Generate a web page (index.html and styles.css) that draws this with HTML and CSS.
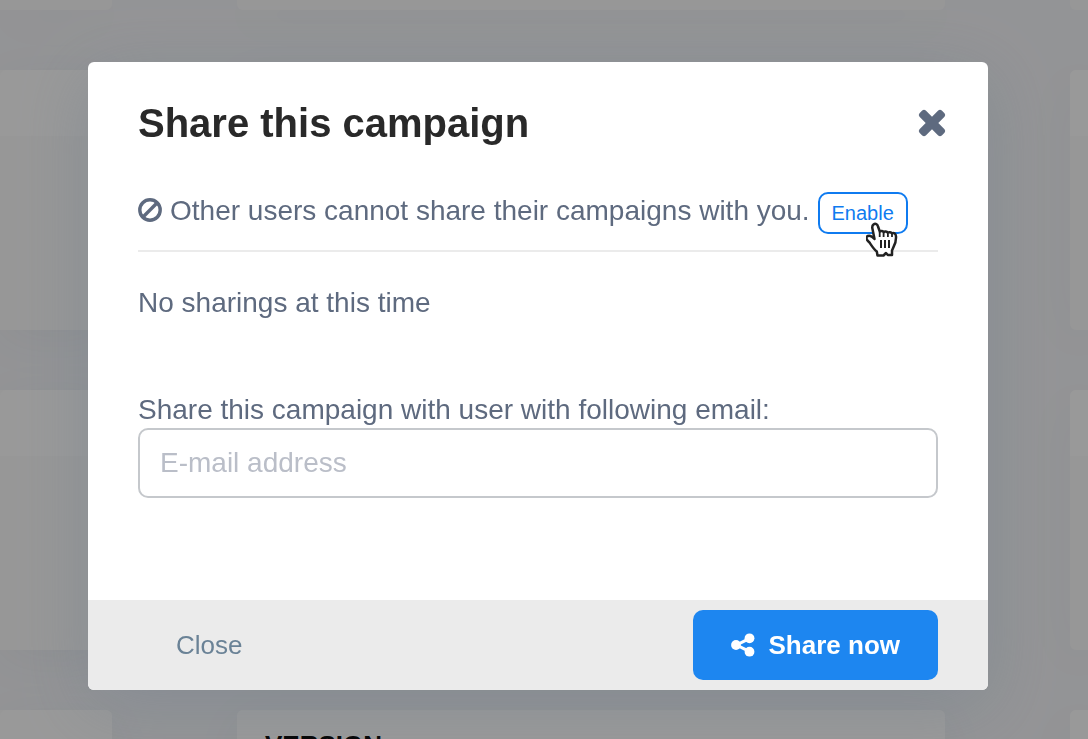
FILE: index.html
```html
<!DOCTYPE html>
<html lang="en">
<head>
    <meta charset="UTF-8">
    <meta name="viewport" content="width=device-width, initial-scale=1.0">
    <title>Share this campaign</title>
    <link rel="stylesheet" href="styles.css">
</head>
<body>

    <!-- dashboard behind the modal -->
    <div class="board">
        <div class="column column-left">
            <div class="card card-cut"></div>
            <div class="card"><div class="card-head"></div></div>
            <div class="card"><div class="card-head"></div></div>
            <div class="card"><div class="card-head"></div></div>
        </div>
        <div class="column">
            <div class="card card-cut"></div>
            <div class="card card-tall"></div>
            <div class="card"><div class="card-head">VERSION</div></div>
        </div>
        <div class="column column-right">
            <div class="card card-cut"></div>
            <div class="card"><div class="card-head"></div></div>
            <div class="card"><div class="card-head"></div></div>
            <div class="card"><div class="card-head"></div></div>
        </div>
    </div>

    <div class="overlay">
        <div class="modal" role="dialog" aria-labelledby="modal-title">
            <div class="modal-header">
                <h1 id="modal-title">Share this campaign</h1>
                <button type="button" class="btn-x" aria-label="Close dialog">
                    <svg width="28" height="28" viewBox="0 0 28 28" fill="currentColor">
                        <path d="M4.200 1.500Q6 0 7.800 1.500L14 7.700 20.200 1.500Q22 0 23.800 1.500L26.500 4.200Q28 6 26.500 7.800L20.300 14 26.500 20.200Q28 22 26.500 23.800L23.800 26.500Q22 28 20.200 26.500L14 20.300 7.800 26.500Q6 28 4.200 26.500L1.500 23.800Q0 22 1.500 20.200L7.700 14 1.500 7.800Q0 6 1.500 4.200Z"/>
                    </svg>
                </button>
            </div>

            <div class="modal-body">
                <div class="status">
                    <svg class="icon-ban" width="24" height="24" viewBox="0 0 24 24" fill="none" stroke="currentColor" stroke-width="3.400">
                        <circle cx="12" cy="12" r="10.200"/>
                        <path d="M4.800 19.200 19.200 4.800"/>
                    </svg>
                    <span>Other users cannot share their campaigns with you.</span>
                    <div class="enable">
                        <button type="button" class="btn-enable">Enable</button>
                        <!-- hand pointer -->
                        <svg class="pointer" width="32" height="36" viewBox="0 0 32 36">
                            <path d="M7.500 2.500C9.500 1 11.500 2.300 12 4.500L13.800 9.500C15 8.700 16.800 8.900 17.600 10.200 18.800 9.200 20.800 9.400 21.800 10.800 23.200 9.800 25 10 25.900 11.300 27.800 10.300 30 11.500 30 14.500 30.200 19 29.500 22 27.300 25.500L26 28.500 26 33 21.800 33 20 31 17.500 33.500 11.500 33.500 10.800 29.500C8 27.500 5.500 23.500 3.500 20.500 0 17.500-.5 15 1.800 14 3.800 13.200 6.300 14.500 8.500 17L6.500 7C6 5 6.200 3.500 7.500 2.500Z" fill="#fff" stroke="#222" stroke-width="2.500" stroke-linejoin="round"/>
                            <path d="M13.700 10v5M17.600 11v4M21.900 11.500V15M26 12v3" fill="none" stroke="#222" stroke-width="1.800"/>
                            <path d="M15 18v8M19 18v8M23 18v8" fill="none" stroke="#222" stroke-width="2"/>
                        </svg>
                    </div>
                </div>

                <p class="empty">No sharings at this time</p>

                <label for="email">Share this campaign with user with following email:</label>
                <input type="email" id="email" placeholder="E-mail address">
            </div>

            <div class="modal-footer">
                <button type="button" class="btn-close">Close</button>
                <button type="button" class="btn-share">
                    <svg width="24" height="24" viewBox="0 0 24 24" fill="currentColor">
                        <path d="M18.500 5.500 5.500 12 18.500 18.500" fill="none" stroke="currentColor" stroke-width="3"/>
                        <circle cx="18.500" cy="5.300" r="4.900"/>
                        <circle cx="5" cy="12" r="4.900"/>
                        <circle cx="18.500" cy="18.700" r="4.900"/>
                    </svg>
                    Share now
                </button>
            </div>
        </div>
    </div>

</body>
</html>
```
FILE: styles.css
```css
* {
    box-sizing: border-box;
}

body {
    margin: 0;
    height: 100vh;
    overflow: hidden;
    background: #f6f7fa;
    color: #5e6a7f;
    font-family: "Liberation Sans", Arial, sans-serif;
    font-size: 28px;
    line-height: 36px;
}

button,
input {
    font-family: inherit;
}

button {
    cursor: pointer;
}

/* board */
.board {
    display: grid;
    grid-template-columns: 112px 1fr 18px;
    column-gap: 125px;
    height: 100vh;
    overflow: hidden;
}

.column {
    display: flex;
    flex-direction: column;
    gap: 60px;
}

.card {
    flex: none;
    height: 260px;
    background: #fcfcfc;
    border-radius: 6px;
    box-shadow: 0 10px 50px rgba(60, 70, 100, 0.05);
}

.card-cut {
    height: 10px;
    border-radius: 0 0 6px 6px;
}

.card-tall {
    height: 580px;
}

.card-head {
    height: 66px;
    padding: 17px 28px 13px;
    background: #fff;
    border-radius: 6px 6px 0 0;
    color: #000;
    font-size: 26px;
    font-weight: bold;
}

.column-left .card {
    border-top-left-radius: 0;
    border-bottom-left-radius: 0;
}

.column-right .card {
    border-top-right-radius: 0;
    border-bottom-right-radius: 0;
}

/* modal */
.overlay {
    position: fixed;
    inset: 0;
    padding: 62px 100px 0 88px;
    background: rgba(0, 0, 0, 0.4);
}

.modal {
    background: #fff;
    border-radius: 6px;
    box-shadow: 0 15px 70px rgba(110, 124, 140, 0.4);
}

.modal-header {
    display: flex;
    justify-content: space-between;
    align-items: center;
    padding: 36px 42px 0 50px;
}

.modal-header h1 {
    margin: 0;
    color: #292929;
    font-size: 40px;
    line-height: 50px;
}

.btn-x {
    display: flex;
    padding: 0;
    border: 0;
    background: none;
    color: #5e6a7f;
}

.modal-body {
    padding: 44px 50px 102px;
}

.status {
    display: flex;
    align-items: flex-start;
    gap: 8px;
    height: 60px;
    border-bottom: 2px solid #ebebeb;
    line-height: 38px;
}

.icon-ban {
    flex: none;
    margin-top: 6px;
}

.enable {
    position: relative;
}

.btn-enable {
    display: block;
    width: 90px;
    height: 42px;
    padding: 0;
    border: 2px solid #0f7bf0;
    border-radius: 10px;
    background: #fff;
    color: #0f7bf0;
    font-size: 20px;
}

.pointer {
    position: absolute;
    top: 30px;
    left: 48px;
}

.empty {
    margin: 32px 0 70px;
    line-height: 38px;
}

label {
    display: block;
}

input {
    display: block;
    width: 100%;
    height: 70px;
    padding: 0 20px;
    border: 2px solid #c5c8cc;
    border-radius: 10px;
    background: #fff;
    color: #5e6a7f;
    font-size: 28px;
}

input::placeholder {
    color: #babec8;
    opacity: 1;
}

.modal-footer {
    display: flex;
    justify-content: space-between;
    align-items: center;
    padding: 10px 50px;
    background: #ebebeb;
    border-radius: 0 0 6px 6px;
}

.modal-footer button {
    height: 70px;
    padding: 0 38px;
    border: 0;
    border-radius: 10px;
    font-size: 26px;
}

.btn-close {
    background: none;
    color: #6a8296;
}

.btn-share {
    display: flex;
    align-items: center;
    gap: 14px;
    background: #1d86f0;
    color: #fff;
    font-weight: bold;
}
```
